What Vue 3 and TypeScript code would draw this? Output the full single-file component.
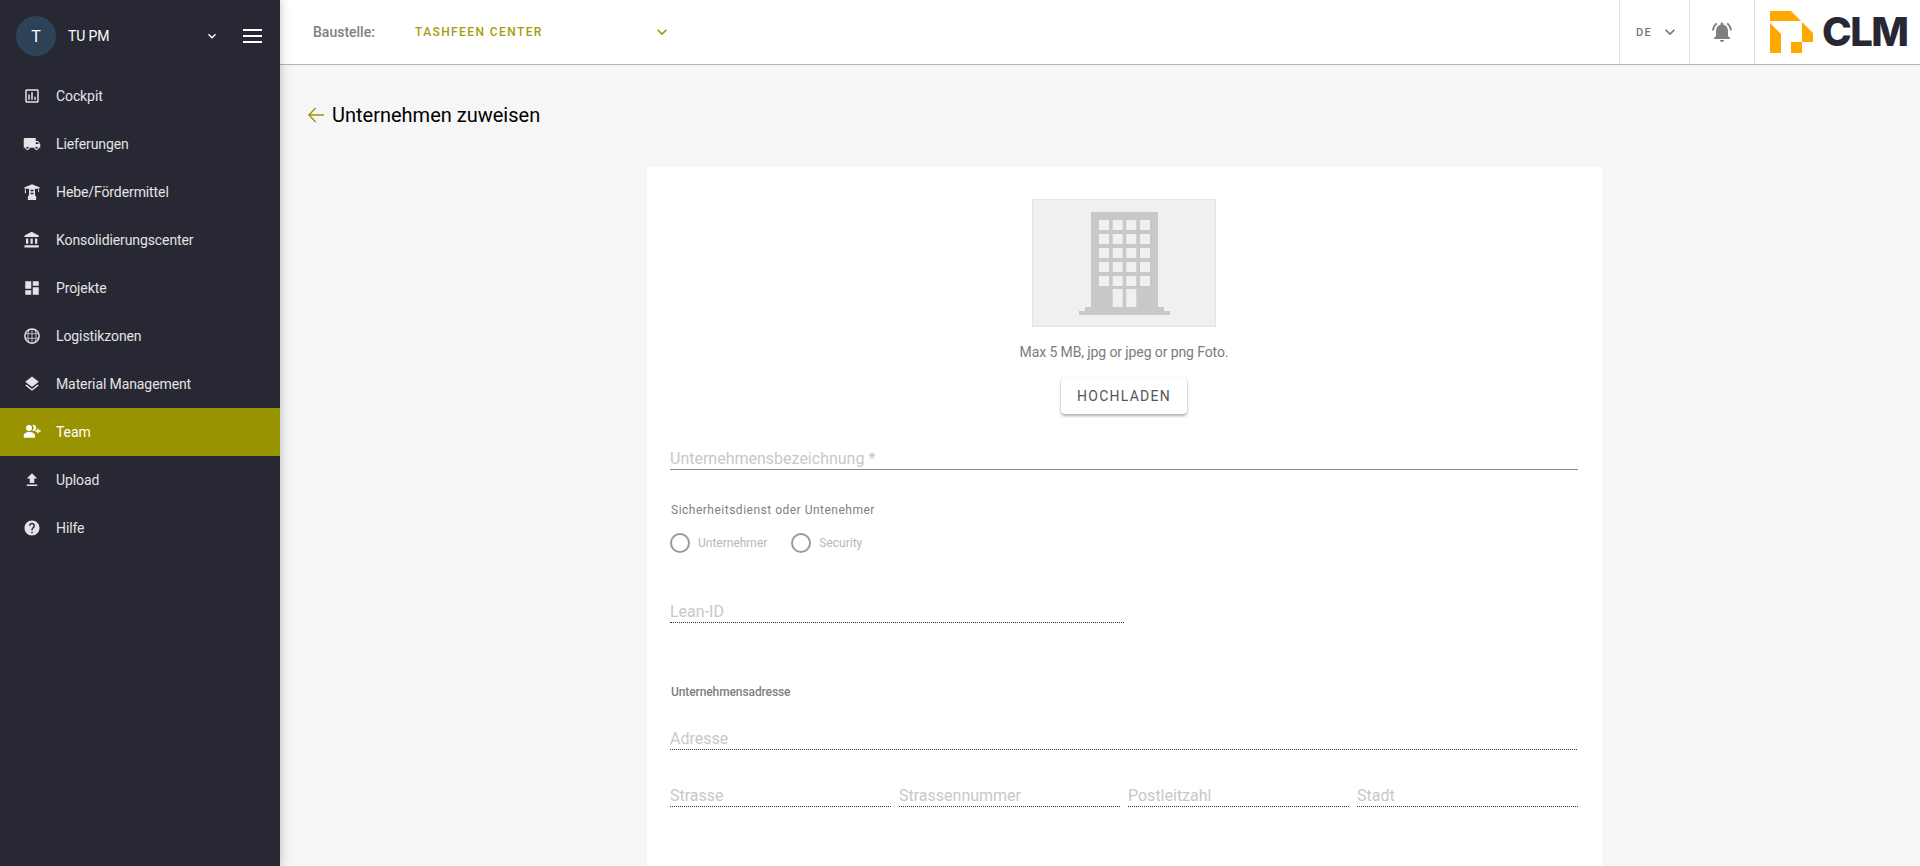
<script setup lang="ts">
interface NavItem {
  label: string
  icon: string
  active?: boolean
}

const navItems: NavItem[] = [
  { label: 'Cockpit', icon: 'cockpit' },
  { label: 'Lieferungen', icon: 'truck' },
  { label: 'Hebe/Fördermittel', icon: 'crane' },
  { label: 'Konsolidierungscenter', icon: 'bank' },
  { label: 'Projekte', icon: 'dashboard' },
  { label: 'Logistikzonen', icon: 'globe' },
  { label: 'Material Management', icon: 'layers' },
  { label: 'Team', icon: 'team', active: true },
  { label: 'Upload', icon: 'upload' },
  { label: 'Hilfe', icon: 'help' }
]

const iconPaths: Record<string, string> = {
  cockpit: 'M19 3H5c-1.1 0-2 .9-2 2v14c0 1.1.9 2 2 2h14c1.1 0 2-.9 2-2V5c0-1.1-.9-2-2-2zm0 16H5V5h14v14zM7 10h2v7H7zm4-3h2v10h-2zm4 6h2v4h-2z',
  truck: 'M20 8h-3V4H3c-1.1 0-2 .9-2 2v11h2c0 1.66 1.34 3 3 3s3-1.34 3-3h6c0 1.66 1.34 3 3 3s3-1.34 3-3h2v-5l-3-4zM6 18.5c-.83 0-1.5-.67-1.5-1.5s.67-1.5 1.5-1.5 1.5.67 1.5 1.5-.67 1.5-1.5 1.5zm13.5-9l1.96 2.5H17V9.5h2.5zm-1.5 9c-.83 0-1.5-.67-1.5-1.5s.67-1.5 1.5-1.5 1.5.67 1.5 1.5-.67 1.5-1.5 1.5z',
  crane: 'M2 5.5 9 3l3-1.5L15 3l7 2.5v2h-6V17h1.5v5.5h-11V17H8V7.5H2zM10 9v2h4V9zM10 13v2h4v-2zM2.5 8.5h1.4v5H2.5zM20 8.5h1.4v3H20z',
  bank: 'M4 10v7h3v-7H4zm6 0v7h3v-7h-3zM2 22h19v-3H2v3zm14-12v7h3v-7h-3zm-4.5-9L2 6v2h19V6l-9.5-5z',
  dashboard: 'M3 13h8V3H3v10zm0 8h8v-6H3v6zm10 0h8V11h-8v10zm0-18v6h8V3h-8z',
  layers: 'M11.99 18.54l-7.37-5.73L3 14.07l9 7 9-7-1.63-1.27-7.38 5.74zM12 16l7.36-5.73L21 9l-9-7-9 7 1.63 1.27L12 16z',
  team: 'M8 2.5a4 4 0 1 0 0 8 4 4 0 0 0 0-8zM1 19.5v-3C1 14 5 12 8.5 12s7.5 2 7.5 4.5v3zM12.5 2.7a4 4 0 1 1 0 7.6 5.5 5.5 0 0 0 0-7.6zM19 7.5h2v2h2.5v2H21v2h-2v-2h-2.5v-2H19z',
  upload: 'M9 16h6v-6h4l-7-7-7 7h4zm-4 2h14v2H5z',
  help: 'M12 2C6.48 2 2 6.48 2 12s4.48 10 10 10 10-4.48 10-10S17.52 2 12 2zm1 17h-2v-2h2v2zm2.07-7.75l-.9.92C13.45 12.9 13 13.5 13 15h-2v-.5c0-1.1.45-2.1 1.17-2.83l1.24-1.26c.37-.36.59-.86.59-1.41 0-1.1-.9-2-2-2s-2 .9-2 2H8c0-2.21 1.79-4 4-4s4 1.79 4 4c0 .88-.36 1.68-.93 2.25z'
}

const windowXs = [67, 80.7, 94.3, 108]
const windowYs = [21, 35, 49, 63, 77]
const addressParts = ['Strasse', 'Strassennummer', 'Postleitzahl', 'Stadt']
</script>

<template>
  <div class="page">
    <aside class="sidebar">
      <div class="user-row">
        <div class="avatar">T</div>
        <span class="user-name">TU PM</span>
        <svg class="user-chevron" viewBox="0 0 24 24" width="16" height="16">
          <path d="M7.4 8.6 12 13.2l4.6-4.6L18 10l-6 6-6-6z" fill="#fff" />
        </svg>
        <div class="burger"><span></span><span></span><span></span></div>
      </div>
      <nav>
        <a v-for="item in navItems" :key="item.label" class="nav-item" :class="{ active: item.active }">
          <svg class="nav-icon" viewBox="0 0 24 24" width="18" height="18">
            <template v-if="item.icon === 'globe'">
              <circle cx="12" cy="12" r="9.5" fill="none" stroke="currentColor" stroke-width="2" />
              <path d="M4 9h16M4 15h16M12 3v18M8 4c-2 5-2 11 0 16M16 4c2 5 2 11 0 16" stroke="currentColor" stroke-width="1" fill="none" />
            </template>
            <path v-else :d="iconPaths[item.icon]" fill="currentColor" fill-rule="evenodd" />
          </svg>
          <span>{{ item.label }}</span>
        </a>
      </nav>
    </aside>

    <div class="main">
      <header class="topbar">
        <span class="site-label">Baustelle:</span>
        <div class="site-select">
          <span>TASHFEEN CENTER</span>
          <svg viewBox="0 0 24 24" width="20" height="20">
            <path d="M7.4 8.6 12 13.2l4.6-4.6L18 10l-6 6-6-6z" fill="#9a9500" />
          </svg>
        </div>
        <div class="top-cell lang">
          <span>DE</span>
          <svg viewBox="0 0 24 24" width="20" height="20">
            <path d="M7.4 8.6 12 13.2l4.6-4.6L18 10l-6 6-6-6z" fill="#757575" />
          </svg>
        </div>
        <div class="top-cell bell">
          <svg viewBox="0 0 24 24" width="24" height="24">
            <path d="M7.58 4.08L6.15 2.65C3.75 4.48 2.17 7.3 2.03 10.5h2c.15-2.65 1.51-4.97 3.55-6.42zm12.39 6.42h2c-.15-3.2-1.73-6.02-4.12-7.85l-1.42 1.43c2.02 1.45 3.39 3.77 3.54 6.42zM18 11c0-3.07-1.64-5.64-4.5-6.32V4c0-.83-.67-1.5-1.5-1.5s-1.5.67-1.5 1.5v.68C7.63 5.36 6 7.92 6 11v5l-2 2v1h16v-1l-2-2v-5zm-6 11c.14 0 .27-.01.4-.04.65-.14 1.18-.58 1.44-1.18.1-.24.15-.5.15-.78h-4c.01 1.1.9 2 2.01 2z" fill="#808080" />
          </svg>
        </div>
        <div class="top-cell logo">
          <svg viewBox="0 0 43 42" width="43" height="42">
            <path d="M0 0H21L31 10H0Z" fill="#ffa800" />
            <path d="M0 12 11 23V42H0Z" fill="#ffa800" />
            <path d="M32 11 43 22V31H32Z" fill="#ffa800" />
            <path d="M21 31H32V42H21Z" fill="#ffa800" />
          </svg>
          <span class="logo-text">CLM</span>
        </div>
      </header>

      <main class="content">
        <div class="title-row">
          <svg viewBox="0 0 24 24" width="24" height="24">
            <path d="M20 11.2H6.6l5.6-5.6L11.2 4.6 4 12l7.2 7.4 1-1-5.6-5.6H20z" fill="#9a9500" />
          </svg>
          <h1>Unternehmen zuweisen</h1>
        </div>

        <section class="card">
          <div class="photo-box">
            <svg viewBox="0 0 184 128" width="184" height="128">
              <path d="M59 13H126V108H132V112H138V116H47V112H53V108H59Z" fill="#c8c8c8" />
              <template v-for="y in windowYs" :key="y">
                <rect v-for="x in windowXs" :key="x" :x="x" :y="y" width="10" height="10" fill="#f0f0f0" />
              </template>
              <rect x="80.7" y="90" width="10" height="18" fill="#f0f0f0" />
              <rect x="94.3" y="90" width="10" height="18" fill="#f0f0f0" />
            </svg>
          </div>
          <p class="photo-hint">Max 5 MB, jpg or jpeg or png Foto.</p>
          <button class="upload-btn">HOCHLADEN</button>

          <div class="field name-field">Unternehmensbezeichnung *</div>

          <div class="radio-title">Sicherheitsdienst oder Untenehmer</div>
          <div class="radio-row">
            <label class="radio"><i></i>Unternehmer</label>
            <label class="radio"><i></i>Security</label>
          </div>

          <div class="field dotted lean-field">Lean-ID</div>

          <div class="address-title">Unternehmensadresse</div>
          <div class="field dotted address-field">Adresse</div>
          <div class="address-grid">
            <div v-for="part in addressParts" :key="part" class="field dotted">{{ part }}</div>
          </div>
          <div class="card-rest"></div>
        </section>
      </main>
    </div>
  </div>
</template>

<style>
html,
body {
  margin: 0;
  overflow: hidden;
}
</style>

<style scoped>
.page {
  display: flex;
  height: 866px;
  overflow: hidden;
  font-family: Roboto, "Liberation Sans", sans-serif;
  background: #f6f6f6;
}

.sidebar {
  width: 280px;
  flex-shrink: 0;
  background: #272833;
  box-shadow: 0 0 10px rgba(0, 0, 0, 0.25);
  z-index: 2;
}

.user-row {
  display: flex;
  align-items: center;
  height: 72px;
  padding-left: 16px;
}

.avatar {
  width: 40px;
  height: 40px;
  border-radius: 50%;
  background: #2d4257;
  color: #fff;
  font-size: 16px;
  display: flex;
  align-items: center;
  justify-content: center;
}

.user-name {
  margin-left: 12px;
  color: #fff;
  font-size: 14px;
  letter-spacing: -0.1px;
  width: 136px;
}

.burger {
  margin-left: 23px;
  width: 19px;
  display: flex;
  flex-direction: column;
  gap: 4px;
}

.burger span {
  height: 2px;
  background: #fff;
}

.nav-item {
  display: flex;
  align-items: center;
  height: 48px;
  padding-left: 23px;
  color: #e4e4e4;
  font-size: 14px;
  letter-spacing: -0.1px;
}

.nav-item.active {
  background: #989300;
  color: #fff;
}

.nav-icon {
  margin-right: 15px;
}

.main {
  flex: 1;
  min-width: 0;
  display: flex;
  flex-direction: column;
}

.topbar {
  height: 65px;
  flex-shrink: 0;
  box-sizing: border-box;
  background: #fff;
  border-bottom: 1px solid #b4b4b4;
  display: flex;
  align-items: stretch;
  padding-left: 33px;
}

.site-label {
  align-self: center;
  width: 102px;
  font-size: 14px;
  font-weight: 500;
  color: #808080;
}

.site-select {
  align-self: center;
  width: 257px;
  display: flex;
  align-items: center;
  justify-content: space-between;
  color: #a39e0c;
  font-size: 12px;
  font-weight: 500;
  letter-spacing: 1.4px;
  margin-right: auto;
}

.top-cell {
  display: flex;
  align-items: center;
  border-left: 1px solid #e0e0e0;
  box-sizing: border-box;
}

.lang {
  width: 70px;
  padding-left: 16px;
  gap: 8px;
  color: #757575;
  font-size: 11px;
  font-weight: 500;
  letter-spacing: 1.2px;
}

.bell {
  width: 65px;
  justify-content: center;
}

.logo {
  width: 166px;
  padding-left: 15px;
  gap: 9px;
}

.logo-text {
  font-family: Inter, sans-serif;
  font-weight: 800;
  font-size: 40px;
  line-height: 1;
  letter-spacing: -1.5px;
  color: #272833;
}

.content {
  flex: 1;
  min-height: 0;
}

.title-row {
  display: flex;
  align-items: center;
  gap: 4px;
  height: 100px;
  margin-bottom: 2px;
  padding-left: 24px;
}

.title-row h1 {
  margin: 0;
  font-size: 20px;
  font-weight: 400;
  color: #000;
}

.card {
  width: 955px;
  box-sizing: border-box;
  margin-left: 367px;
  background: #fff;
  padding: 32px 24px 0 23px;
  display: flex;
  flex-direction: column;
}

.photo-box {
  align-self: center;
  width: 184px;
  height: 128px;
  background: #f0f0f0;
  box-shadow: inset 0 0 2px rgba(0, 0, 0, 0.18);
}

.photo-box svg {
  display: block;
}

.photo-hint {
  align-self: center;
  margin: 16px 0 0;
  font-size: 14px;
  line-height: 18px;
  letter-spacing: -0.1px;
  color: #7c7c7c;
}

.upload-btn {
  align-self: center;
  margin-top: 17px;
  width: 126px;
  height: 36px;
  border: none;
  border-radius: 4px;
  background: #fff;
  box-shadow: 0 2px 3px rgba(0, 0, 0, 0.3), 0 0 2px rgba(0, 0, 0, 0.1);
  font-family: inherit;
  font-size: 14px;
  letter-spacing: 1.25px;
  color: #555;
}

.field {
  height: 26px;
  box-sizing: border-box;
  padding-top: 4px;
  border-bottom: 1px solid #8c8c8c;
  font-size: 16px;
  line-height: 22px;
  color: #c8c8c8;
}

.field.dotted {
  border-bottom: 1px dotted #333;
}

.name-field {
  margin-top: 30px;
}

.radio-title {
  margin-top: 32px;
  padding-left: 1px;
  font-size: 12px;
  line-height: 16px;
  color: #808080;
  letter-spacing: 0.5px;
}

.radio-row {
  display: flex;
  gap: 24px;
  margin-top: 15px;
}

.radio {
  display: flex;
  align-items: center;
  gap: 8px;
  font-size: 12px;
  color: #b8b8b8;
}

.radio i {
  width: 20px;
  height: 20px;
  box-sizing: border-box;
  border: 2px solid #9a9a9a;
  border-radius: 50%;
}

.lean-field {
  margin-top: 44px;
  width: 454px;
}

.address-title {
  margin-top: 61px;
  padding-left: 1px;
  font-size: 12px;
  line-height: 16px;
  font-weight: 500;
  letter-spacing: -0.1px;
  color: #808080;
}

.address-field {
  margin-top: 24px;
  width: 907px;
}

.address-grid {
  display: grid;
  grid-template-columns: repeat(4, 221px);
  gap: 8px;
  margin-top: 31px;
}

.card-rest {
  height: 120px;
}
</style>
